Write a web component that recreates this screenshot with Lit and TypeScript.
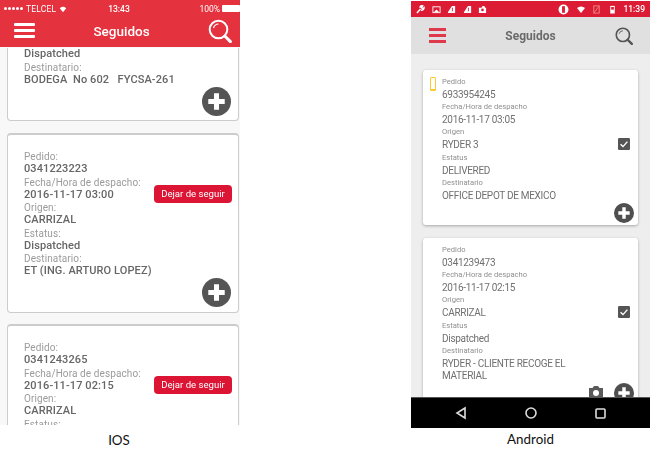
import { LitElement, html, css, svg } from "lit";
import { customElement } from "lit/decorators.js";

type F = [string, string];
const iosF = (a: string, b: string, c: string, d?: string): F[] => {
  const r: F[] = [["Pedido:", a], ["Fecha/Hora de despacho:", b], ["Origen:", c], ["Estatus:", "Dispatched"]];
  if (d) r.push(["Destinatario:", d]);
  return r;
};
const andF = (a: string, b: string, c: string, e: string, d: string): F[] => [
  ["Pedido", a], ["Fecha/Hora de despacho", b], ["Origen", c], ["Estatus", e], ["Destinatario", d],
];

const plus = (bg: string) => html`<svg viewBox="0 0 30 30" width="100%" height="100%"><circle cx="15" cy="15" r="15" fill="${bg}"/><path d="M15 6.5v17M6.5 15h17" stroke="#fff" stroke-width="5.2" fill="none"/></svg>`;
const search = (c: string, sw: number) => html`<svg viewBox="0 0 24 24" width="100%" height="100%" fill="none" stroke="${c}"><circle cx="10.5" cy="10.5" r="8.8" stroke-width="${sw}"/><path d="M5.5 9a5.5 5.5 0 0 1 5-4" stroke-width="1.2"/><path d="M16.8 17l5.6 5.6" stroke-width="${sw + 1}" stroke-linecap="round"/></svg>`;
const check = html`<svg viewBox="0 0 12 12" width="12" height="12"><rect width="12" height="12" rx="1.2" fill="#555"/><path d="M2.6 6.2l2.4 2.4 4.4-5" stroke="#fff" stroke-width="1.4" fill="none"/></svg>`;
const ico = (d: unknown, w = 9) => html`<svg viewBox="0 0 10 10" width="${w}" height="${w}">${d}</svg>`;

@customElement("app-root")
export class AppRoot extends LitElement {
  static styles = css`
    :host { display: block; width: 650px; height: 450px; background: #fff; overflow: hidden; font-family: Roboto, "Liberation Sans", sans-serif; }
    .page { display: flex; height: 450px; }
    .col { display: flex; flex-direction: column; width: 240px; }
    .col.ios { margin-right: 171px; }
    .col.android { padding-top: 1px; }
    .caption { font: 13.4px Lato, "Liberation Sans", sans-serif; color: #111; text-align: center; margin-top: 7px; line-height: 16px; }
    .ios .caption { padding-right: 2px; }
    .android .caption { margin-top: 3px; }

    .phone { display: flex; flex-direction: column; overflow: hidden; filter: blur(0.6px); }
    .ios .phone { height: 425px; background: #f8f8f8; }
    .android .phone { height: 427px; background: #eee; }

    .ihead { background: #e4323f; color: #fff; height: 47px; flex: none; display: flex; flex-direction: column; }
    .istatus { height: 15px; display: grid; grid-template-columns: 1fr auto 1fr; align-items: center; font-size: 8.5px; padding: 1px 0 0 4px; }
    .istatus .time { font-weight: 500; font-size: 8.5px; padding-right: 6px; }
    .istatus .l { display: flex; align-items: center; gap: 3px; letter-spacing: .2px; }
    .istatus .r { display: flex; align-items: center; justify-content: flex-end; gap: 2px; }
    .dots { display: flex; gap: 1px; }
    .dots i { width: 3px; height: 3px; border-radius: 50%; background: #fff; }
    .batt { width: 18px; height: 7px; background: #fff; border-radius: 1px; }
    .ibar { flex: 1; display: flex; align-items: center; padding: 0 8px 2px 14px; }
    .burger { display: flex; flex-direction: column; }
    .ibar .burger { width: 21px; gap: 3px; }
    .ibar .burger i { height: 3px; background: #fff; border-radius: 1px; }
    .ibar .title { flex: 1; text-align: center; font-size: 13.5px; font-weight: 500; }
    .ibar .s { width: 24px; height: 24px; }

    .ilist { display: flex; flex-direction: column; gap: 11px; padding: 0 1px 0 7px; }
    .clipTop { height: 74px; display: flex; flex-direction: column; justify-content: flex-end; overflow: hidden; flex: none; margin-bottom: 1px; }
    .icard { position: relative; background: #fff; border: 1px solid #ccc; border-top-width: 2px; border-radius: 4px; box-sizing: border-box; width: 232px; padding: 16px 0 0 16px; height: 180px; display: flex; flex: none; }
    .icard.top { height: auto; border-top: none; border-radius: 0 0 4px 4px; padding-top: 0; padding-bottom: 33px; }
    .icard.top .iplus { bottom: 4px; }
    .ifields { flex: 1; min-width: 0; display: flex; flex-direction: column; white-space: nowrap; }
    .ifields .lab { color: #9b9b9b; font-size: 10px; line-height: 12px; letter-spacing: .1px; }
    .ifields .val { color: #666; font-size: 11px; line-height: 13.5px; font-weight: 500; letter-spacing: .1px; margin: -1px 0 1px; }
    .unf { display: block; flex: none; background: #dd1535; color: #fff; font-size: 9.6px; font-weight: 400; height: 18px; line-height: 18px; width: 78px; text-align: center; border-radius: 4px; margin: 34px 6px 0 0; }
    .iplus { position: absolute; right: 7px; bottom: 5px; width: 29px; height: 29px; }

    .astatus { height: 16px; background: #dc1c34; flex: none; display: flex; align-items: center; padding: 0 5px 0 5px; gap: 6.5px; color: #fff; font-size: 8.5px; font-weight: 500; }
    .astatus svg { display: block; }
    .astatus .sp { flex: 1; }
    .abar { height: 37px; background: #e0e0e0; flex: none; display: flex; align-items: center; padding: 0 17px 0 18px; }
    .abar .burger { width: 17px; gap: 3.5px; }
    .abar .burger i { height: 2.5px; background: #de3a4c; }
    .abar .title { flex: 1; text-align: center; font-size: 12px; font-weight: 700; color: #6a6a6a; }
    .abar .s { width: 18px; height: 18px; }
    .alist { flex: 1; min-height: 0; display: flex; flex-direction: column; gap: 13px; padding: 16px 12px 0 12px; overflow: hidden; }
    .acard { position: relative; background: #fff; border-radius: 3px; box-shadow: 0 1px 3px rgba(0,0,0,.3); height: 155px; display: flex; flex: none; box-sizing: border-box; padding: 6px 0 0 19px; }
    .acard.tall { height: 167px; }
    .phoneIc { position: absolute; left: 7px; top: 7px; width: 4px; height: 11px; border: 1.3px solid #fdc72f; border-bottom-width: 2.4px; border-radius: 1.5px; }
    .afields { flex: 1; display: flex; flex-direction: column; }
    .afields .lab { color: #8f8f8f; font-size: 7.6px; line-height: 12px; }
    .afields .val { color: #707070; font-size: 10px; line-height: 13.2px; letter-spacing: -.3px; max-width: 140px; }
    .afields .val.long { line-height: 12px; margin-top: 1px; }
    .chk { flex: none; margin: 59px 8px 0 0; height: 12px; }
    .aplus { position: absolute; right: 4px; bottom: 2px; width: 20px; height: 20px; }
    .cam { position: absolute; right: 33px; bottom: 5px; width: 18px; height: 16px; }
    .nav { height: 31px; flex: none; background: #000; border-top: 1px solid #555; box-sizing: border-box; display: flex; align-items: center; padding: 0 44px 0 44px; justify-content: space-between; }
    .nav svg { display: block; }
  `;

  private icard(f: F[], btn = true, top = false) {
    return html`<div class="icard ${top ? "top" : ""}">
      <div class="ifields">${f.map(([l, v]) => html`<div class="lab">${l}</div><div class="val">${v}</div>`)}</div>
      ${btn ? html`<span class="unf">Dejar de seguir</span>` : ""}
      <div class="iplus">${plus("#555")}</div>
    </div>`;
  }
  private acard(f: F[], tall = false) {
    return html`<div class="acard ${tall ? "tall" : ""}">
      ${tall ? "" : html`<div class="phoneIc"></div>`}
      <div class="afields">${f.map(([l, v]) => html`<div class="lab">${l}</div><div class="val ${v.length > 30 ? "long" : ""}">${v}</div>`)}</div>
      <div class="chk">${check}</div>
      ${tall ? html`<div class="cam"><svg viewBox="0 0 16 16" width="18" height="16"><path d="M1 4h3.5L6 2h4l1.5 2H15v10H1z" fill="#5a5a5a"/><circle cx="8" cy="9" r="3" fill="#fff"/></svg></div>` : ""}
      <div class="aplus">${plus("#4f4f4f")}</div>
    </div>`;
  }

  render() {
    const wh = svg`<path d="M1 4a6 6 0 0 1 8 0L5 9z" fill="#fff"/>`;
    return html`<div class="page">
      <section class="col ios">
        <div class="phone">
          <header class="ihead">
            <div class="istatus">
              <div class="l"><span class="dots"><i></i><i></i><i></i><i></i><i></i></span><span>TELCEL</span>${ico(wh, 8)}</div>
              <div class="time">13:43</div>
              <div class="r"><span>100%</span><span class="batt"></span></div>
            </div>
            <div class="ibar">
              <div class="burger"><i></i><i></i><i></i></div>
              <div class="title">Seguidos</div>
              <div class="s">${search("#fff", 2)}</div>
            </div>
          </header>
          <div class="ilist">
            <div class="clipTop">
              <div class="icard top">
                <div class="ifields">
                  <div class="val">Dispatched</div>
                  <div class="lab">Destinatario:</div>
                  <div class="val">BODEGA&nbsp; No 602 &nbsp; FYCSA-261</div>
                </div>
                <div class="iplus">${plus("#555")}</div>
              </div>
            </div>
            ${this.icard(iosF("0341223223", "2016-11-17 03:00", "CARRIZAL", "ET (ING. ARTURO LOPEZ)"))}
            ${this.icard(iosF("0341243265", "2016-11-17 02:15", "CARRIZAL"))}
          </div>
        </div>
        <div class="caption">IOS</div>
      </section>
      <section class="col android">
        <div class="phone">
          <div class="astatus">
            ${ico(svg`<path d="M1 9l4-4.5M4.5 3a2 2 0 0 1 3-2L6 3l1.5 1.2L9 3a2.6 2.6 0 0 1-3.4 2.6" stroke="#fff" stroke-width="1.6" fill="none"/>`)}
            ${ico(svg`<rect x="1" y="2" width="8" height="6.5" fill="none" stroke="#fff"/><path d="M2 8l3-3 3 3z" fill="#fff"/>`)}
            ${ico(svg`<path d="M1 8L5.5 1H9v8H1z" fill="#fff"/><path d="M6 3v4" stroke="#dc1c34"/>`)}
            ${ico(svg`<path d="M1 8L5.5 1H9v8H1z" fill="#fff"/><path d="M6 3v4" stroke="#dc1c34"/>`)}
            ${ico(svg`<path d="M2 3h2l1-2h2l1 2h1v6H1V3z" fill="#fff"/><circle cx="5" cy="5.5" r="1.5" fill="#dc1c34"/>`)}
            <span class="sp"></span>
            ${ico(svg`<circle cx="5" cy="5" r="4.5" fill="#fff"/><rect x="3.7" y="2" width="2.6" height="6" fill="#dc1c34"/>`, 11)}
            ${ico(wh, 10)}
            ${ico(svg`<rect x="2" y="1" width="6" height="8" fill="none" stroke="#e88" /><path d="M2 9L8 1" stroke="#e88"/>`)}
            ${ico(svg`<rect x="2.5" y="1" width="5" height="8.5" fill="#fff"/><rect x="3.5" y="2.2" width="3" height="3" fill="#dc1c34"/>`)}
            <span>11:39</span>
          </div>
          <header class="abar">
            <div class="burger"><i></i><i></i><i></i></div>
            <div class="title">Seguidos</div>
            <div class="s">${search("#555", 2.2)}</div>
          </header>
          <div class="alist">
            ${this.acard(andF("6933954245", "2016-11-17 03:05", "RYDER 3", "DELIVERED", "OFFICE DEPOT DE MEXICO"))}
            ${this.acard(andF("0341239473", "2016-11-17 02:15", "CARRIZAL", "Dispatched", "RYDER - CLIENTE RECOGE EL MATERIAL"), true)}
          </div>
          <nav class="nav">
            <svg width="12" height="14" viewBox="0 0 12 14"><path d="M10 2v10L2 7z" fill="none" stroke="#ddd" stroke-width="1.6"/></svg>
            <svg width="12" height="12" viewBox="0 0 12 12"><circle cx="6" cy="6" r="5" fill="none" stroke="#ddd" stroke-width="1.6"/></svg>
            <svg width="11" height="11" viewBox="0 0 11 11"><rect x="1" y="1" width="9" height="9" rx="1" fill="none" stroke="#ddd" stroke-width="1.6"/></svg>
          </nav>
        </div>
        <div class="caption">Android</div>
      </section>
    </div>`;
  }
}
